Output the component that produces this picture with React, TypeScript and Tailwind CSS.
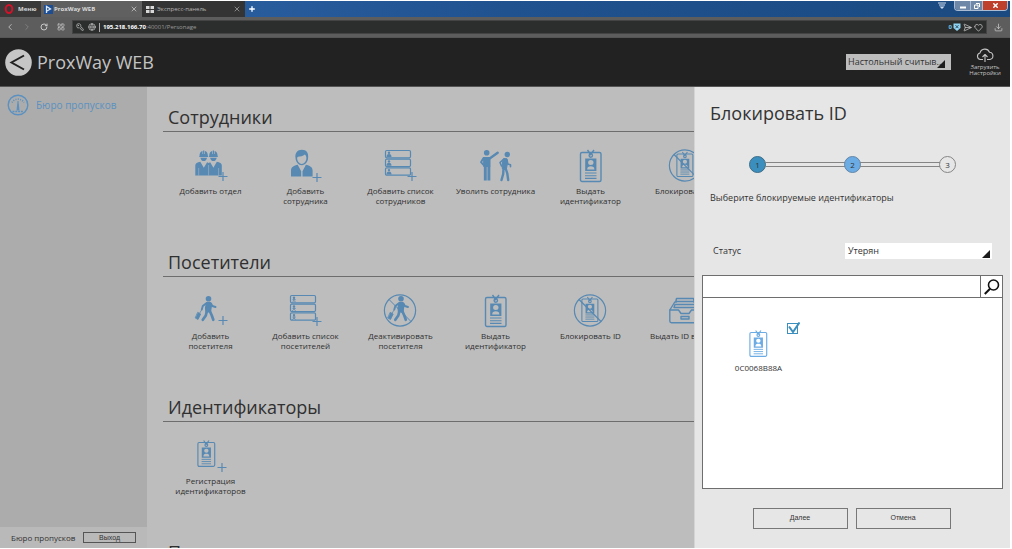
import React from 'react';
import { ChevronLeft, ChevronRight, Download, Globe, Heart, KeyRound, LayoutGrid, Plus, RotateCw, SendHorizontal, X } from 'lucide-react';

type IconProps = { className?: string };

const iconClass = 'w-[38px] h-[38px]';

const PlusMark = ({ x = 31, y = 28 }: { x?: number; y?: number }) => (
  <path d={`M${x - 4.5} ${y + 0.5}h9M${x} ${y - 4}v9`} stroke="currentColor" strokeWidth="1.2" fill="none" />
);

// Badge body in its own 22x32 box, reused by several icons
const BadgeShape = () => (
  <g>
    <rect x="0.5" y="2.5" width="20.5" height="29" rx="1.5" fill="none" stroke="currentColor" strokeWidth="1.4" />
    <path d="M7.500 0l3.100 4.500L14 0" fill="none" stroke="currentColor" strokeWidth="1.4" />
    <circle cx="10.8" cy="5.6" r="1.7" fill="none" stroke="currentColor" strokeWidth="1.4" />
    <path
      fillRule="evenodd"
      fill="currentColor"
      d="M5.200 8.500h11.200v12.500h-11.200zM10.800 10a2.700 2.500 0 1 0 0 5 2.700 2.500 0 1 0 0-5zM7.200 19.500h7.200c0-2.600-1.600-3.200-3.600-3.200s-3.600.6-3.600 3.200z"
    />
    <path d="M5 23h11.500M5 25.700h11.500M5 28.400h11.500" stroke="currentColor" strokeWidth="1.100" />
  </g>
);

const TravellerShape = () => (
  <g fill="none" stroke="currentColor" strokeLinecap="round" strokeLinejoin="round">
    <circle cx="16.500" cy="5.700" r="2.800" fill="currentColor" stroke="none" />
    <path d="M14.500 9.700h4l.8 3.500-.8 5.800h-4.500l-.5-4z" fill="currentColor" strokeWidth="1.200" />
    <path d="M14 10.500l-3.200 2.500-1 3.500M19 10.500l1.300 2.500 3.200 1" strokeWidth="1.900" />
    <path d="M14.800 18.500l-1 4-3 4.300M18 18.500l1.800 4 1.500 4.300" strokeWidth="2.700" />
    <path d="M9.500 17l-1.700 3" strokeWidth="0.800" />
    <path d="M6 19.500l2.700 1.500-2.700 5.500-2.500-1.400z" fill="currentColor" strokeWidth="0.800" />
  </g>
);

const DepartmentIcon = () => (
  <svg viewBox="0 0 38 38" className={iconClass} aria-hidden="true">
    {[0, 9.7].map((dx) => (
      <g key={dx} transform={`translate(${dx} 0)`} fill="currentColor">
        <path d="M7.500 8c0-3 1.200-4.600 3-5.100v3h.6V2.600h1.200v3.300h.6v-3c1.800.5 3 2.100 3 5.100l.4.900H7.100z" />
        <path d="M8.400 9.700h6.600c-.3 2-1.600 3.400-3.300 3.400S8.700 11.700 8.400 9.700z" />
      </g>
    ))}
    <path
      fill="currentColor"
      d="M3.300 27.500V17.500c0-2.200 2-3.100 5-3.700l3.500 6 3.300-5.600 1.500.8 1.600-.8 3.200 5.600 3.400-6c3 .6 5 1.500 5 3.700v10z"
    />
    <path d="M6.700 20v7.500M16.600 17v10.500M26.600 20v7.500" stroke="#bdbdbd" strokeWidth="0.500" />
    <PlusMark x={31} />
  </svg>
);

const EmployeeIcon = () => (
  <svg viewBox="0 0 38 38" className={iconClass} aria-hidden="true">
    <path
      fill="currentColor"
      fillRule="evenodd"
      d="M8.500 10c-.8-5 2-8.200 6.300-8.200 4.800 0 7 3.400 6.300 8.200-.2 4-3 7-6.200 7.200-3.500 0-6.200-3.200-6.400-7.200zm1.600-.2c0 3.600 2.200 6.100 4.700 6.100 2.400 0 4.600-2.500 4.600-6.100-.1-1.600-.8-2.600-1.500-3.300-2 1.700-4.500 2.200-7 2.200z"
    />
    <path fill="currentColor" d="M4 28.500v-6c0-3.500 3-4.800 6.700-5.700l3.500 6.500v5.200zM25.600 28.500v-6c0-3.500-3-4.800-6.700-5.700l-3.400 6.500v5.200z" />
    <PlusMark x={30} y={29} />
  </svg>
);

const ListIcon = ({ visitor }: { visitor?: boolean }) => (
  <svg viewBox="0 0 38 38" className={iconClass} aria-hidden="true">
    {[2.5, 11.2, 19.9].map((y) => (
      <g key={y} transform={`translate(0 ${y})`}>
        <rect x="3.500" y="0" width="25" height="7.300" rx="1.200" fill="none" stroke="currentColor" strokeWidth="1.200" />
        <circle cx="7" cy="2.200" r="1.200" fill="currentColor" />
        {visitor ? (
          <path d="M7 3v2l1.500 1.600M7 5L5.300 6.700M5.500 4.200h3.200" stroke="currentColor" strokeWidth="0.900" fill="none" />
        ) : (
          <path d="M4.500 6.600c0-2 .8-3 2.500-3s2.500 1 2.500 3z" fill="currentColor" />
        )}
      </g>
    ))}
    <PlusMark x={30} />
  </svg>
);

const FireIcon = () => (
  <svg viewBox="0 0 38 38" className={iconClass} aria-hidden="true">
    <g fill="none" stroke="currentColor" strokeLinecap="round" strokeLinejoin="round">
      <circle cx="9.700" cy="4.700" r="2.800" fill="currentColor" stroke="none" />
      <path d="M7 9.500h6v9H7z" fill="currentColor" strokeWidth="1" />
      <path d="M13 10.200L20.700 4.700" strokeWidth="2.400" />
      <path d="M6.500 10l-2.500 4.200 2.500 2.600" strokeWidth="1.900" />
      <path d="M8.300 18v14.500M11.900 18v14.500" strokeWidth="2.900" strokeLinecap="butt" />
      <circle cx="30.300" cy="6.500" r="2.700" fill="currentColor" stroke="none" />
      <path d="M27 10.500l3 .3 .5 4-1 5.700h-4.300l.3-6z" fill="currentColor" strokeWidth="1" />
      <path d="M26.500 11.300L23 14.500l1.500 3.500M30 12l.8 4 2.700.8v2" strokeWidth="1.600" />
      <path d="M26.500 20.500l-.3 5.500-1.700 6M28.700 20.500l1.600 5 .9 6.500" strokeWidth="2.400" />
    </g>
  </svg>
);

const BadgeIcon = () => (
  <svg viewBox="0 0 38 38" className={iconClass} aria-hidden="true">
    <g transform="translate(8 2)">
      <BadgeShape />
    </g>
  </svg>
);

const BlockIcon = () => (
  <svg viewBox="0 0 38 38" className={iconClass} aria-hidden="true">
    <circle cx="18" cy="17.500" r="15.600" fill="none" stroke="currentColor" strokeWidth="1.200" />
    <g transform="translate(9.500 4) scale(0.78)">
      <BadgeShape />
    </g>
    <path d="M7 6.500l22 22" stroke="currentColor" strokeWidth="1.200" />
  </svg>
);

const VisitorIcon = () => (
  <svg viewBox="0 0 38 38" className={iconClass} aria-hidden="true">
    <TravellerShape />
    <PlusMark x={31} y={27} />
  </svg>
);

const DeactivateIcon = () => (
  <svg viewBox="0 0 38 38" className={iconClass} aria-hidden="true">
    <circle cx="18" cy="17.500" r="15.600" fill="none" stroke="currentColor" strokeWidth="1.200" />
    <path d="M7 6.500l22 22" stroke="currentColor" strokeWidth="1" />
    <g transform="translate(2.500 0)">
      <TravellerShape />
    </g>
  </svg>
);

const DrawerIcon = () => (
  <svg viewBox="0 0 38 38" className={iconClass} aria-hidden="true">
    <g fill="none" stroke="currentColor" strokeWidth="1.400" strokeLinejoin="round">
      <path d="M2.800 17v11c0 1 .7 1.700 1.700 1.700h27c1 0 1.700-.7 1.700-1.700V17h-8.700l-2.500 3.500h-8L11.500 17z" />
      <path d="M2.800 17l5-8h2M33.200 17l-5-8h-2M9.500 5.500h17l.7 3H8.800zM8 11.500h20l1 3H7z" />
      <rect x="14" y="23.500" width="8" height="2.500" />
    </g>
  </svg>
);

const SmallBadge = () => (
  <g transform="translate(5.500 2.500) scale(0.82)">
    <BadgeShape />
  </g>
);

const RegisterIcon = () => (
  <svg viewBox="0 0 38 38" className={iconClass} aria-hidden="true">
    <SmallBadge />
    <PlusMark x={30} y={29} />
  </svg>
);

const GaugeIcon = ({ className }: IconProps) => (
  <svg viewBox="0 0 22 22" className={className} aria-hidden="true">
    <g fill="none" stroke="currentColor">
      <circle cx="11" cy="11" r="9.800" strokeWidth="1.400" />
      <path d="M5 8.500A7 7 0 0 1 17 8.500" strokeWidth="1.600" strokeDasharray="1 1.300" />
      <path d="M5.500 17.500h11" strokeWidth="1.600" strokeDasharray="2 0.800" />
    </g>
    <path d="M10.500 7h1l1 9.500h-3z" fill="currentColor" />
  </svg>
);

const CloudUploadIcon = ({ className }: IconProps) => (
  <svg viewBox="0 0 18 15" className={className} aria-hidden="true">
    <g fill="none" stroke="currentColor" strokeWidth="1.100" strokeLinejoin="round">
      <path d="M7 11.500H4.500A3.300 3.300 0 0 1 4 5a5 5 0 0 1 9.500-.8 3.700 3.700 0 0 1 .5 7.300h-3" />
      <path d="M9 14V6.500M6.500 9L9 6.500 11.500 9" />
    </g>
  </svg>
);

const Corner = ({ className }: IconProps) => (
  <svg viewBox="0 0 8 8" className={`pointer-events-none absolute h-2 w-2 ${className}`} aria-hidden="true">
    <path d="M8 0v8H0z" fill="#1c1c1c" />
  </svg>
);

const sections = [
  {
    title: 'Сотрудники',
    items: [
      { label: 'Добавить отдел', icon: DepartmentIcon },
      { label: 'Добавить сотрудника', icon: EmployeeIcon },
      { label: 'Добавить список сотрудников', icon: () => <ListIcon /> },
      { label: 'Уволить сотрудника', icon: FireIcon },
      { label: 'Выдать идентификатор', icon: BadgeIcon },
      { label: 'Блокировать ID', icon: BlockIcon },
    ],
  },
  {
    title: 'Посетители',
    items: [
      { label: 'Добавить посетителя', icon: VisitorIcon },
      { label: 'Добавить список посетителей', icon: () => <ListIcon visitor /> },
      { label: 'Деактивировать посетителя', icon: DeactivateIcon },
      { label: 'Выдать идентификатор', icon: BadgeIcon },
      { label: 'Блокировать ID', icon: BlockIcon },
      { label: 'Выдать ID в архив', icon: DrawerIcon },
    ],
  },
  {
    title: 'Идентификаторы',
    items: [{ label: 'Регистрация идентификаторов', icon: RegisterIcon }],
  },
  { title: 'П', items: [] },
];

const steps = [
  { n: 1, style: 'bg-[#3b8fbe] border-[#3f6d88]' },
  { n: 2, style: 'bg-[#6cace4] border-[#6286a8]' },
  { n: 3, style: 'bg-[#e6e6e6] border-[#858585]' },
];

const BrowserChrome = () => (
  <div className="shrink-0 text-[6px] text-[#d8d8d8]">
    <div className="flex h-4 bg-linear-to-r from-[#2f66a8] via-[#205290] to-[#1b4a80]">
      <button className="flex w-[41px] items-center gap-1 bg-[#3a3a3a] pl-1 font-bold">
        <svg viewBox="0 0 10 10" className="h-[10px] w-[10px]" aria-hidden="true">
          <ellipse cx="5" cy="5" rx="3.300" ry="4" fill="none" stroke="#d3122a" strokeWidth="2" />
        </svg>
        Меню
      </button>
      <div className="flex w-[101px] items-center bg-[#606060] pl-[3px] pr-1 font-bold">
        <svg viewBox="0 0 9 9" className="mr-px h-[9px] w-[9px]" aria-hidden="true">
          <path d="M0 0h9v9H0z" fill="#1d4d92" />
          <path d="M2.500 8V1.500l4 2.500-4 2.300" fill="none" stroke="#dce8f6" strokeWidth="1.300" />
        </svg>
        <span className="flex-1">ProxWay WEB</span>
        <button aria-label="Закрыть вкладку ProxWay WEB"><X size={8} /></button>
      </div>
      <div className="flex w-[103px] items-center gap-[3px] bg-[#343434] pl-1 pr-1 text-[#b4b4b4]">
        <svg viewBox="0 0 8 7" className="h-[7px] w-2 text-[#d8d8d8]" aria-hidden="true">
          <path d="M0 0h3.500v3H0zM4.500 0H8v3H4.500zM0 4h3.500v3H0zM4.500 4H8v3H4.500z" fill="currentColor" />
        </svg>
        <span className="flex-1">Экспресс-панель</span>
        <button aria-label="Закрыть вкладку Экспресс-панель"><X size={8} /></button>
      </div>
      <button className="px-[3px]" aria-label="Новая вкладка"><Plus size={8} strokeWidth={4} color="#fff" /></button>
      <div className="ml-auto flex items-start gap-2 pr-[2px]">
        <svg viewBox="0 0 8 8" className="mt-px h-2 w-2" aria-hidden="true">
          <path d="M0 1h8M1 3h6" stroke="#cfdcec" />
          <path d="M1.500 4.500h5L4 7z" fill="#cfdcec" />
        </svg>
        <div className="flex h-[10px] overflow-hidden rounded-b-sm border border-t-0 border-[#a9bcd4] text-white">
          <button aria-label="Свернуть" className="flex w-[15px] items-center justify-center bg-[#6f88a8]">
            <svg viewBox="0 0 6 6" className="h-[6px] w-[6px]"><path d="M0 3.500h6v2H0z" fill="currentColor" /></svg>
          </button>
          <button aria-label="Развернуть" className="flex w-[13px] items-center justify-center border-x border-[#a9bcd4] bg-[#6f88a8]">
            <svg viewBox="0 0 6 6" className="h-[6px] w-[6px]"><path d="M2 .5h3.500V4M.5 2H4v3.500H.5z" fill="none" stroke="currentColor" /></svg>
          </button>
          <button aria-label="Закрыть" className="flex w-6 items-center justify-center bg-[#bd3f2c]"><X size={7} strokeWidth={5} /></button>
        </div>
      </div>
    </div>
    <div className="flex h-5 items-center bg-[#5d5d5d] text-[#c8c8c8]">
      <button className="w-[18px] pl-[5px]" aria-label="Назад"><ChevronLeft size={10} /></button>
      <button className="w-[18px] pl-1 text-[#858585]" aria-label="Вперёд"><ChevronRight size={10} /></button>
      <button className="w-[18px] pl-1" aria-label="Обновить"><RotateCw size={8} strokeWidth={3} /></button>
      <button className="w-[18px] pl-[3px]" aria-label="Экспресс-панель"><LayoutGrid size={8} /></button>
      <div className="flex h-[14px] flex-1 items-center border border-[#444] bg-[#2c2e2d] px-[3px]">
        <KeyRound size={8} className="-scale-x-100" />
        <Globe size={8} className="ml-1" />
        <span className="ml-[3px] border-l border-[#aaa] pl-[3px] leading-[9px] text-[#9a9a9a]">
          <b className="text-white">195.218.166.70</b>:40001/Personage
        </span>
        <span className="ml-auto font-bold text-[#6fc3ea]">0</span>
        <svg viewBox="0 0 8 8" className="ml-px h-2 w-2" aria-hidden="true">
          <path d="M.5.500h7v4.500L4 8 .5 5z" fill="#8fd4f2" />
          <path d="M2.500 2.200l3 3M5.500 2.200l-3 3" stroke="#2c4a5c" />
        </svg>
        <SendHorizontal size={9} className="ml-[2px]" />
        <Heart size={9} className="ml-[2px]" />
      </div>
      <button className="px-[7px]" aria-label="Загрузки"><Download size={9} /></button>
    </div>
  </div>
);

const Header = () => (
  <header className="flex h-[50px] shrink-0 items-center border-y border-[#555] bg-[#222] pl-[5px] pr-[11px] text-[#c4c4c4]">
    <a href="#" aria-label="Назад" className="shrink-0">
      <svg viewBox="0 0 27 27" className="h-[27px] w-[27px]" aria-hidden="true">
        <circle cx="13.500" cy="13.500" r="13.300" fill="#c6c6c6" />
        <path d="M19 6.500L6.500 13.500 19 20.500" fill="none" stroke="#222" strokeWidth="2" />
      </svg>
    </a>
    <h1 className="ml-[5px] text-[18px] leading-6">ProxWay WEB</h1>
    <div className="relative ml-auto">
      <select aria-label="Считыватель" className="block h-4 w-[105px] appearance-none bg-[#bdbdbd] pl-[2px] text-[9px] leading-4 text-[#333]">
        <option>Настольный считыв...</option>
      </select>
      <Corner className="bottom-[2px] right-[6px]" />
    </div>
    <button className="ml-[20px] flex w-7 flex-col items-center text-[6px] leading-[6px]">
      <CloudUploadIcon className="mb-px h-[15px] w-[18px]" />
      <span>Загрузить</span>
      <span>Настройки</span>
    </button>
  </header>
);

const Sidebar = () => (
  <aside className="flex w-[147px] shrink-0 flex-col bg-[#acacac]">
    <a href="#" className="flex items-center gap-[7px] px-[7px] pt-[7px] text-[10px] text-[#5b91c0]">
      <GaugeIcon className="h-[22px] w-[22px]" />
      Бюро пропусков
    </a>
    <div className="mt-auto flex h-[21px] items-center justify-between bg-[#b9b9b9] pl-[11px] pr-[11px] text-[8px] text-[#333]">
      <span>Бюро пропусков</span>
      <button className="h-[11px] w-[53px] border border-[#555] font-[Liberation_Sans,sans-serif] text-[7px] leading-[9px]">Выход</button>
    </div>
  </aside>
);

const Main = () => (
  <main className="min-w-0 flex-1 overflow-hidden bg-[#bdbdbd] pl-4 pt-4">
    {sections.map((section) => (
      <section key={section.title}>
        <h2 className="border-b border-[#6d6d6d] pl-[5px] text-[18px] leading-7 text-[#303030]">{section.title}</h2>
        <div className="flex pb-[42px] pt-4">
          {section.items.map((item) => (
            <button key={item.label} className="flex w-[95px] shrink-0 flex-col items-center text-[8px] leading-[10px] text-[#303030]">
              <span className="text-[#5789b3]"><item.icon /></span>
              <span className="w-20">{item.label}</span>
            </button>
          ))}
        </div>
      </section>
    ))}
  </main>
);

const BlockPanel = () => (
  <form className="flex w-[316px] shrink-0 flex-col border-l border-[#d4d4d4] bg-[#e6e6e6] px-[7px] pt-3 text-[9px] text-[#333]">
    <h2 className="pl-2 text-[18px] leading-7">Блокировать ID</h2>
    <ol className="mx-[47px] mt-[29px] flex items-center">
      {steps.map((step) => (
        <React.Fragment key={step.n}>
          {step.n > 1 && <li aria-hidden="true" className="-mx-px h-[5px] flex-1 border-y border-[#858585]" />}
          <li className={`flex h-[17px] w-[17px] items-center justify-center rounded-full border text-[8px] leading-none ${step.style}`}>
            {step.n}
          </li>
        </React.Fragment>
      ))}
    </ol>
    <p className="mt-[18px] pl-2 leading-[14px]">Выберите блокируемые идентификаторы</p>
    <div className="mt-[38px] flex items-center pl-[11px] pr-[11px]">
      <label htmlFor="status" className="flex-1">Статус</label>
      <div className="relative w-[147px]">
        <select id="status" className="block h-4 w-full appearance-none bg-white pl-[3px] text-[9px] leading-4">
          <option>Утерян</option>
        </select>
        <Corner className="bottom-px right-[2px]" />
      </div>
    </div>
    <div className="mt-4 flex min-h-0 flex-1 flex-col border border-[#6e6e6e] bg-white">
      <div className="flex h-[22px] border-b border-[#6e6e6e]">
        <input type="text" aria-label="Поиск" className="min-w-0 flex-1 px-1 outline-none" />
        <button type="button" aria-label="Найти" className="flex w-[22px] items-center justify-center border-l border-[#6e6e6e]">
          <svg viewBox="0 0 16 16" className="h-4 w-4" aria-hidden="true">
            <circle cx="9.500" cy="6" r="5" fill="none" stroke="#111" strokeWidth="1.600" />
            <path d="M6 9.800L.8 15" stroke="#111" strokeWidth="2" />
          </svg>
        </button>
      </div>
      <div className="flex pl-[31px] pt-6">
        <label htmlFor="card" className="flex w-[49px] flex-col items-center pt-2 text-[8px] leading-[10px]">
          <svg viewBox="5 2 19 28" className="mb-[5px] h-7 w-[19px] text-[#6cace4]" aria-hidden="true">
            <SmallBadge />
          </svg>
          0C0068B88A
        </label>
        <div className="relative ml-1 h-[13px] w-[13px]">
          <input id="card" type="checkbox" defaultChecked className="mt-px block h-[11px] w-[11px] appearance-none border border-[#3b8fbe] bg-white" />
          <svg viewBox="0 0 13 13" className="pointer-events-none absolute inset-0" aria-hidden="true">
            <path d="M2 4.500l4 5.500L12.500.5" fill="none" stroke="#3b8fbe" strokeWidth="2" />
          </svg>
        </div>
      </div>
    </div>
    <div className="flex justify-center gap-2 pb-[19px] pr-[2px] pt-[19px] font-[Liberation_Sans,sans-serif] text-[7px]">
      <button type="button" className="h-[21px] w-[95px] border border-[#777]">Далее</button>
      <button type="button" className="h-[21px] w-[95px] border border-[#777]">Отмена</button>
    </div>
  </form>
);

export default function App() {
  return (
    <div className="flex h-screen flex-col overflow-hidden bg-white py-px pr-[2px] font-[Open_Sans,Noto_Sans,sans-serif]">
      <BrowserChrome />
      <Header />
      <div className="flex min-h-0 flex-1">
        <Sidebar />
        <Main />
        <BlockPanel />
      </div>
    </div>
  );
}
